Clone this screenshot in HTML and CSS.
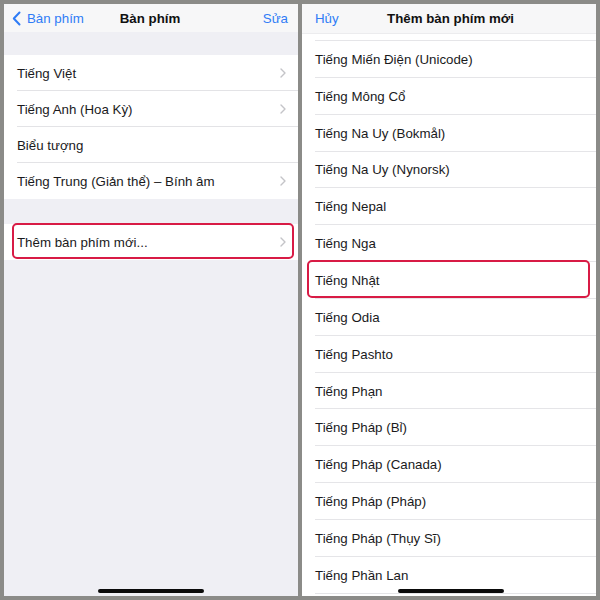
FILE: index.html
```html
<!DOCTYPE html>
<html lang="vi">
<head>
<meta charset="utf-8">
<title>Bàn phím</title>
<link rel="stylesheet" href="styles.css">
</head>
<body>
<div class="frame">
  <section class="panel left">
    <header class="nav">
      <a class="nav-left back">
        <svg class="back-icon" width="9" height="15" viewBox="0 0 9 15"><polyline points="7.5,1.5 1.8,7.5 7.5,13.5" fill="none" stroke="#2f7cf6" stroke-width="2" stroke-linecap="round" stroke-linejoin="round"/></svg>
        <span>Bàn phím</span>
      </a>
      <h1 class="nav-title">Bàn phím</h1>
      <a class="nav-right">Sửa</a>
    </header>
    <div class="group-gap"></div>
    <ul class="list">
      <li class="row"><span>Tiếng Việt</span><svg class="chev" width="6" height="10" viewBox="0 0 6 10"><polyline points="1,1 5,5 1,9" fill="none" stroke="#c4c4c8" stroke-width="1.4" stroke-linecap="round" stroke-linejoin="round"/></svg></li>
      <li class="row"><span>Tiếng Anh (Hoa Kỳ)</span><svg class="chev" width="6" height="10" viewBox="0 0 6 10"><polyline points="1,1 5,5 1,9" fill="none" stroke="#c4c4c8" stroke-width="1.4" stroke-linecap="round" stroke-linejoin="round"/></svg></li>
      <li class="row"><span>Biểu tượng</span></li>
      <li class="row last"><span>Tiếng Trung (Giản thể) – Bính âm</span><svg class="chev" width="6" height="10" viewBox="0 0 6 10"><polyline points="1,1 5,5 1,9" fill="none" stroke="#c4c4c8" stroke-width="1.4" stroke-linecap="round" stroke-linejoin="round"/></svg></li>
    </ul>
    <div class="group-gap big"></div>
    <ul class="list">
      <li class="row last marked marked-left"><span>Thêm bàn phím mới...</span><svg class="chev" width="6" height="10" viewBox="0 0 6 10"><polyline points="1,1 5,5 1,9" fill="none" stroke="#c4c4c8" stroke-width="1.4" stroke-linecap="round" stroke-linejoin="round"/></svg></li>
    </ul>
    <div class="spacer"></div>
    <div class="home-bar"></div>
  </section>

  <section class="panel right">
    <header class="nav nav-tall">
      <a class="nav-left">Hủy</a>
      <h1 class="nav-title">Thêm bàn phím mới</h1>
      <span class="nav-right"></span>
    </header>
    <div class="scroll-top"></div>
    <ul class="list plain">
      <li class="row2">Tiếng Miến Điện (Unicode)</li>
      <li class="row2">Tiếng Mông Cổ</li>
      <li class="row2">Tiếng Na Uy (Bokmål)</li>
      <li class="row2">Tiếng Na Uy (Nynorsk)</li>
      <li class="row2">Tiếng Nepal</li>
      <li class="row2">Tiếng Nga</li>
      <li class="row2 marked marked-right">Tiếng Nhật</li>
      <li class="row2">Tiếng Odia</li>
      <li class="row2">Tiếng Pashto</li>
      <li class="row2">Tiếng Phạn</li>
      <li class="row2">Tiếng Pháp (Bỉ)</li>
      <li class="row2">Tiếng Pháp (Canada)</li>
      <li class="row2">Tiếng Pháp (Pháp)</li>
      <li class="row2">Tiếng Pháp (Thụy Sĩ)</li>
      <li class="row2">Tiếng Phần Lan</li>
    </ul>
    <div class="home-bar overlay"></div>
  </section>
</div>
</body>
</html>
```

FILE: styles.css
```css
* { box-sizing: border-box; }
html, body { margin: 0; padding: 0; }
body {
  width: 600px;
  height: 600px;
  background: #8b8b88;
  font-family: "Liberation Sans", Arial, sans-serif;
  color: #1a1a1c;
  overflow: hidden;
}
.frame {
  display: flex;
  gap: 4px;
  padding: 4px;
  height: 600px;
}
.panel {
  width: 294px;
  height: 592px;
  display: flex;
  flex-direction: column;
  overflow: hidden;
  position: relative;
}
.panel.left { background: #efeff4; }
.panel.right { background: #ffffff; }

.nav {
  height: 28px;
  flex: none;
  display: grid;
  grid-template-columns: 1fr auto 1fr;
  align-items: center;
  background: #f7f7f8;
  padding: 0 10px 0 8px;
  font-size: 13.3px;
}
.nav-tall { height: 30px; padding-left: 13px; border-bottom: 1px solid #ececee; }
.nav-left {
  color: #2f7cf6;
  display: flex;
  align-items: center;
  gap: 6px;
  justify-self: start;
}
.nav-right { color: #2f7cf6; justify-self: end; }
.nav-title {
  margin: 0;
  font-size: 13.3px;
  font-weight: bold;
  color: #111;
}
.back-icon { display: block; }

.group-gap { height: 23px; flex: none; }
.group-gap.big { height: 25px; }

.list {
  list-style: none;
  margin: 0;
  padding: 0;
  background: #fff;
  flex: none;
}
.row {
  height: 36px;
  display: flex;
  align-items: center;
  justify-content: space-between;
  padding: 0 12px 0 13px;
  font-size: 13.3px;
  position: relative;
}
.row::before {
  content: "";
  position: absolute;
  left: 13px;
  right: 0;
  bottom: 0;
  border-bottom: 1px solid #e3e3e6;
}
.row.last::before { display: none; }
.chev { display: block; }

.spacer { flex: 1; }

.scroll-top { height: 7px; flex: none; border-bottom: 1px solid #e5e5e8; margin-left: 13px; }
.list.plain { background: #fff; }
.row2 {
  height: 36.85px;
  display: flex;
  align-items: center;
  padding-left: 13px;
  font-size: 13.3px;
  position: relative;
}
.row2::before {
  content: "";
  position: absolute;
  left: 13px;
  right: 0;
  bottom: 0;
  border-bottom: 1px solid #e5e5e8;
}

.marked::after {
  content: "";
  position: absolute;
  border: 2px solid #d81b45;
  border-radius: 5px;
  pointer-events: none;
}
.marked-left::after { left: 8px; right: 4px; top: -1px; bottom: 1px; }
.marked-right::after { left: 5px; right: 6px; top: -2px; bottom: 1px; }

.home-bar {
  width: 106px;
  height: 4px;
  border-radius: 2px;
  background: #0a0a0a;
  align-self: center;
  margin-bottom: 3px;
  flex: none;
}
.home-bar.overlay {
  position: absolute;
  left: 96px;
  bottom: 3px;
  margin: 0;
}
```
